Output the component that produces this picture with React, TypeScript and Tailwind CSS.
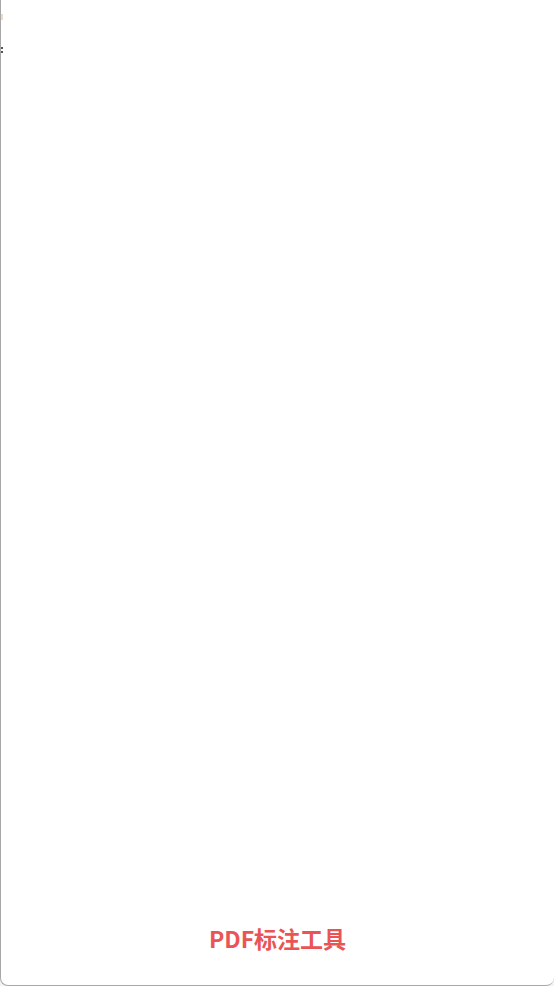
import React from 'react';

// Empty document panel with the app title pinned to the bottom
const App: React.FC = () => {
    return (
        <div className="w-[554px] h-[986px] bg-[#f3f3f3]">
            <div className="relative flex flex-col h-full bg-white border-l border-b border-[#a8a8a8] rounded-b-[8px]">
                <div className="absolute left-0 top-[14px] w-[2px] h-[6px] bg-[#e8dcc8]" />
                <div className="absolute left-0 top-[47px] w-[2px] h-[2px] bg-[#555]" />
                <div className="absolute left-0 top-[51px] w-[2px] h-[2px] bg-[#555]" />
                <div className="flex-1" />
                <div className="flex justify-center pb-[32px]">
                    <p className="text-[23px] leading-[30px] font-bold text-[#ea5455] font-['Noto_Sans_CJK_SC',sans-serif]">
                        PDF标注工具
                    </p>
                </div>
            </div>
        </div>
    );
};

export default App;
